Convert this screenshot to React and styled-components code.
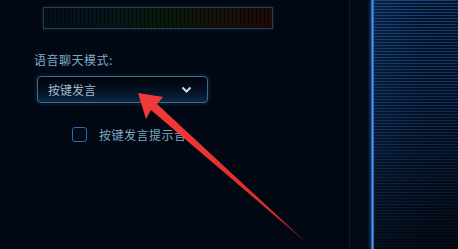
import React from "react";
import styled, { createGlobalStyle } from "styled-components";

const Global = createGlobalStyle`
  html, body { margin: 0; padding: 0; background: #020813; }
  body { width: 458px; height: 249px; overflow: hidden; font-family: "Noto Sans CJK SC", "Noto Sans", sans-serif; }
`;

const Page = styled.div`
  position: relative;
  display: flex;
  width: 458px;
  height: 249px;
  background: #020813;
  overflow: hidden;
`;

const Main = styled.div`
  width: 349px;
  display: flex;
  flex-direction: column;
  padding: 7px 0 0 34px;
  box-sizing: border-box;
`;

const Meter = styled.div`
  margin-left: 9px;
  width: 230px;
  height: 22px;
  box-sizing: border-box;
  border: 1px solid #24404c;
  box-shadow: 0 0 3px rgba(40, 90, 110, 0.5);
  background:
    repeating-linear-gradient(90deg, rgba(0,0,0,0.5) 0 1px, transparent 1px 4px),
    linear-gradient(90deg, #040d1c 0%, #071419 30%, #081a0c 50%, #12130a 70%, #1e0a08 100%);
`;

const Label = styled.div`
  margin-top: 23px;
  font-size: 12px;
  line-height: 16px;
  color: #7eaac4;
  letter-spacing: 0.5px;
`;

const Select = styled.div`
  margin-top: 8px;
  margin-left: 3px;
  width: 171px;
  height: 27px;
  box-sizing: border-box;
  border: 1px solid #3b6c94;
  border-radius: 4px;
  background: linear-gradient(180deg, #01050b 0%, #041022 55%, #0b2846 100%);
  box-shadow: 0 0 0 2px #071421, 0 0 4px rgba(50, 110, 170, 0.4);
  display: flex;
  align-items: center;
  justify-content: space-between;
  padding: 0 15px 0 10px;
  font-size: 12px;
  color: #a3bccb;
`;

const CheckRow = styled.label`
  margin-top: 23px;
  margin-left: 38px;
  display: flex;
  align-items: center;
  gap: 12px;
  font-size: 12px;
  color: #7fa9c0;
  letter-spacing: 0.5px;
`;

const Box = styled.span`
  width: 15px;
  height: 15px;
  box-sizing: border-box;
  border: 1.5px solid #2d6cb4;
  border-radius: 3px;
  background: #030a16;
`;

const Divider = styled.div`
  width: 21px;
  border-left: 1px solid #0d1c2a;
  background: #030a16;
`;

const BlueLine = styled.div`
  width: 3px;
  background: linear-gradient(90deg, #1b4f9a, #4f90e6, #1d5aa8);
  box-shadow: 0 0 4px rgba(60, 130, 230, 0.7);
`;

const Stripes = styled.div`
  flex: 1;
  background:
    linear-gradient(160deg, rgba(2,8,19,0) 0%, rgba(2,8,19,0.35) 45%, rgba(2,6,12,0.92) 100%),
    linear-gradient(90deg, rgba(30,80,150,0.2), rgba(2,8,19,0) 60%),
    repeating-linear-gradient(180deg, #164482 0 1px, #06152a 1px 3px);
`;

const Arrow = styled.svg`
  position: absolute;
  left: 0;
  top: 0;
  pointer-events: none;
`;

export default function App() {
  return (
    <Page>
      <Global />
      <Main>
        <Meter />
        <Label>语音聊天模式:</Label>
        <Select>
          <span>按键发言</span>
          <svg width="11" height="8" viewBox="0 0 11 8">
            <path d="M1.5 1.5 L5.5 5.5 L9.5 1.5" fill="none" stroke="#c9dcec" strokeWidth="2" />
          </svg>
        </Select>
        <CheckRow>
          <Box />
          <span>按键发言提示音</span>
        </CheckRow>
      </Main>
      <Divider />
      <BlueLine />
      <Stripes />
      <Arrow width="458" height="249" viewBox="0 0 458 249">
        <defs>
          <linearGradient id="ag" x1="138" y1="93" x2="308" y2="244" gradientUnits="userSpaceOnUse">
            <stop offset="0" stopColor="#f23b3b" />
            <stop offset="0.8" stopColor="#e12a2a" />
            <stop offset="1" stopColor="#8a1414" />
          </linearGradient>
        </defs>
        <polygon points="138,93 163,97 157,104 308,244 151,110 146,119" fill="url(#ag)" />
      </Arrow>
    </Page>
  );
}
